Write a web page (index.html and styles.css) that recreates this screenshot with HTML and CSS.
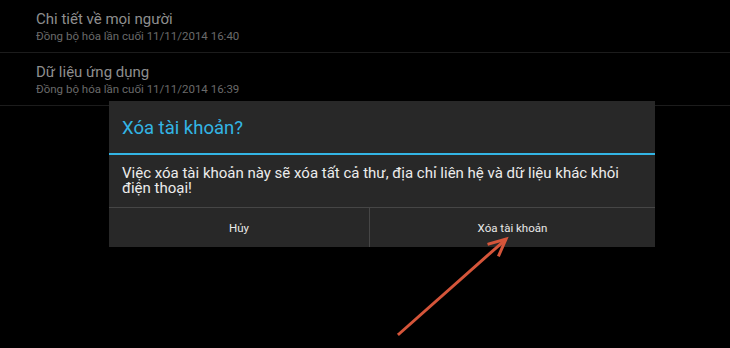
FILE: index.html
```html
<!DOCTYPE html>
<html lang="vi">
<head>
  <meta charset="UTF-8">
  <meta name="viewport" content="width=device-width, initial-scale=1.0">
  <title>Xóa tài khoản</title>
  <link rel="stylesheet" href="styles.css">
</head>
<body>

  <!-- Sync list behind the dialog -->
  <ul class="sync-list">
    <li class="sync-item">
      <div class="sync-title">Chi tiết về mọi người</div>
      <div class="sync-sub">Đồng bộ hóa lần cuối 11/11/2014 16:40</div>
    </li>
    <li class="sync-item">
      <div class="sync-title">Dữ liệu ứng dụng</div>
      <div class="sync-sub">Đồng bộ hóa lần cuối 11/11/2014 16:39</div>
    </li>
  </ul>

  <!-- Confirm dialog -->
  <div class="dialog">
    <div class="dialog-title">Xóa tài khoản?</div>
    <div class="dialog-body">Việc xóa tài khoản này sẽ xóa tất cả thư, địa chỉ liên hệ và dữ liệu khác khỏi điện thoại!</div>
    <div class="dialog-buttons">
      <button class="dialog-btn">Hủy</button>
      <button class="dialog-btn">Xóa tài khoản</button>
    </div>
  </div>

  <!-- Annotation arrow -->
  <svg class="arrow" width="730" height="348" viewBox="0 0 730 348">
    <g stroke="#d5553a" stroke-width="3" stroke-linecap="square" fill="none">
      <line x1="399" y1="334" x2="505" y2="240"/>
      <polyline points="489,244 506,239 499,255"/>
    </g>
  </svg>

</body>
</html>
```

FILE: styles.css
```css
/* Reset */
* {
  margin: 0;
  padding: 0;
  box-sizing: border-box;
}

body {
  width: 730px;
  height: 348px;
  overflow: hidden;
  background: #000;
  font-family: Roboto, "Noto Sans", sans-serif;
  position: relative;
}

/* Sync list */
.sync-list {
  list-style: none;
}

.sync-item {
  height: 53px;
  padding: 10px 0 0 36px;
  border-bottom: 1px solid #1c1c1c;
}

.sync-title {
  font-size: 15px;
  line-height: 18px;
  color: #8e8e8e;
}

.sync-sub {
  font-size: 11.5px;
  line-height: 17px;
  color: #6a6a6a;
}

/* Dialog */
.dialog {
  position: absolute;
  left: 109px;
  top: 101px;
  width: 546px;
  height: 146px;
  background: #282828;
  display: flex;
  flex-direction: column;
}

.dialog-title {
  height: 54px;
  padding: 16px 13px 0;
  font-size: 18.5px;
  line-height: 22px;
  color: #33b5e5;
  border-bottom: 2px solid #33b5e5;
}

.dialog-body {
  height: 52px;
  padding: 11px 13px 0;
  font-size: 15px;
  line-height: 15px;
  color: #ececec;
}

.dialog-buttons {
  flex: 1;
  display: grid;
  grid-template-columns: 260px 1fr;
  border-top: 1px solid #464646;
}

.dialog-btn {
  background: none;
  border: none;
  font-family: inherit;
  font-size: 11.5px;
  color: #e8e8e8;
  padding-top: 1px;
}

.dialog-btn + .dialog-btn {
  border-left: 1px solid #464646;
}

/* Annotation */
.arrow {
  position: absolute;
  left: 0;
  top: 0;
}
```
